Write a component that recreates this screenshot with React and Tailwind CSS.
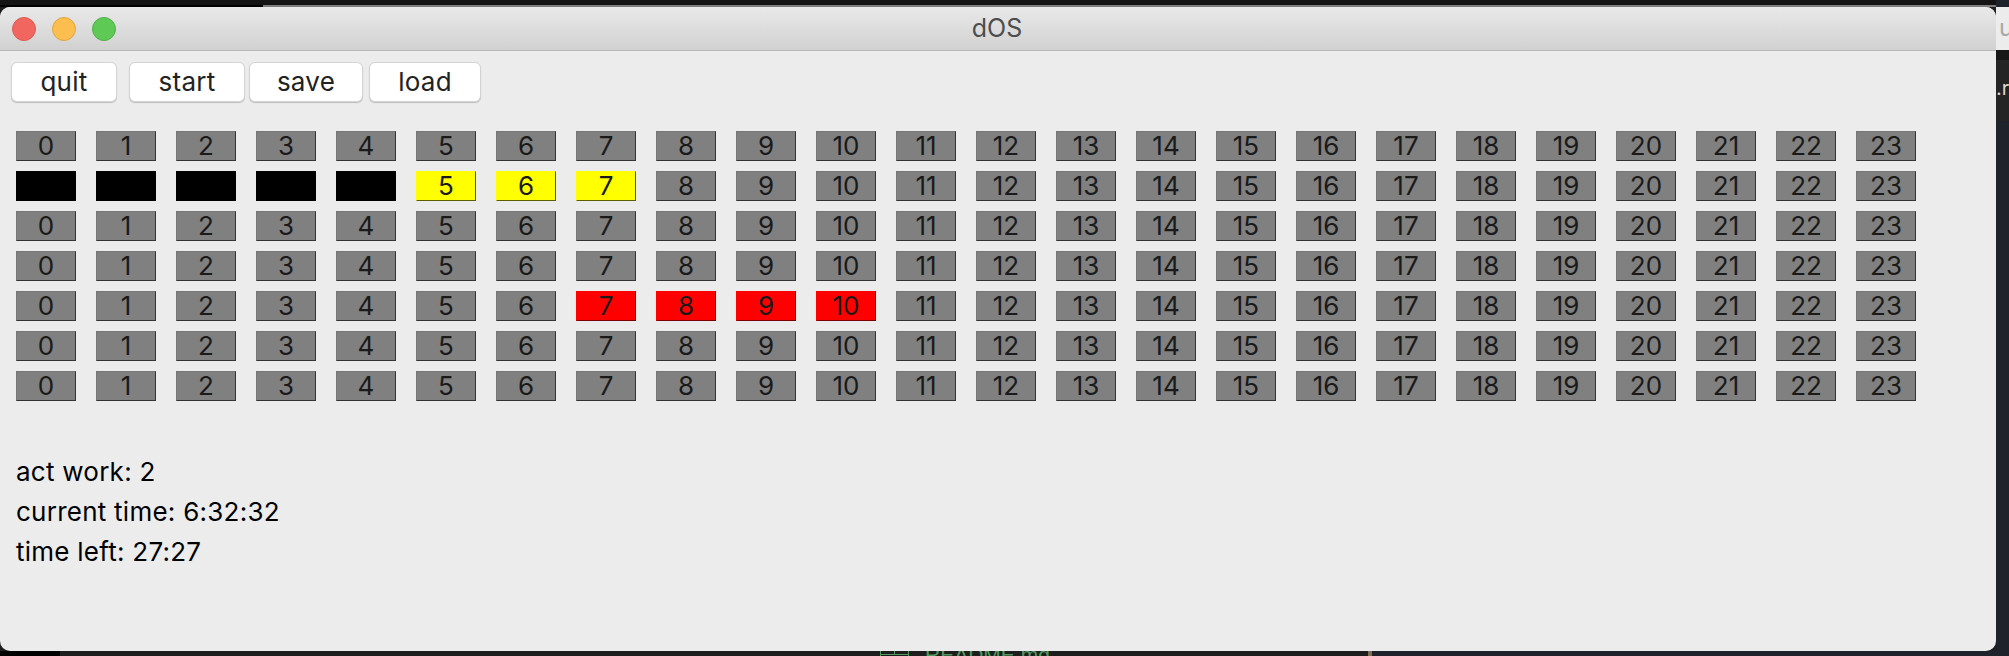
const cols = Array.from({ length: 24 }, (_, i) => i);

// state of the 7 rows: black cells hide their number, others are coloured
const rows = [
  {},
  { black: [0, 1, 2, 3, 4], yellow: [5, 6, 7] },
  {},
  {},
  { red: [7, 8, 9, 10] },
  {},
  {},
];

function Cell({ n, row }) {
  if (row.black?.includes(n)) {
    return <div className="w-[60px] h-[30px] bg-black" />;
  }
  let color = "bg-[#808080] border-r-[#333333] border-b-[#333333] border-t-[#767676] border-l-[#767676]";
  if (row.yellow?.includes(n)) color = "bg-[#ffff00] border-r-[#5c5c00] border-b-[#5c5c00] border-t-[#ffff00] border-l-[#ffff00]";
  if (row.red?.includes(n)) color = "bg-[#ff0000] border-r-[#7a0000] border-b-[#7a0000] border-t-[#ff0000] border-l-[#ff0000]";
  return (
    <div className={`w-[60px] h-[30px] border flex items-center justify-center text-[26px] leading-none text-[#1a1a1a] ${color}`}>
      {n}
    </div>
  );
}

function ToolButton({ label, className }) {
  return (
    <button className={`h-[40px] bg-white rounded-[6px] border border-[#d4d4d4] shadow-[0_1px_1px_rgba(0,0,0,0.2)] text-[26px] tracking-[0.25px] leading-none text-[#222222] ${className}`}>
      {label}
    </button>
  );
}

export default function App() {
  return (
    <div className="relative w-[2009px] h-[656px] overflow-hidden bg-[#1e1e1e] font-['Inter',sans-serif]">
      {/* stuff behind the window */}
      <div className="absolute inset-x-0 top-0 h-[5px] bg-[#141414]" />
      <div className="absolute left-0 top-[5px] w-[263px] h-[2px] bg-black" />
      <div className="absolute left-[263px] right-0 top-[5px] h-[2px] bg-[#7d7d7d]" />
      <div className="absolute left-0 bottom-0 w-[60px] h-[5px] bg-black" />
      <div className="absolute left-[1368px] bottom-0 w-[4px] h-[5px] bg-[#7d6f55]" />
      <div className="absolute left-[1372px] right-0 bottom-0 h-[5px] bg-[#1f222a]" />
      <div className="absolute right-0 top-0 w-[13px] h-full bg-[#1f222a]" />
      <div className="absolute right-0 top-[7px] w-[13px] h-[43px] bg-[#ececec] pl-[3px] overflow-hidden text-[24px] leading-[42px] text-[#a8a8a8]">u</div>
      <div className="absolute right-0 top-[50px] w-[13px] h-[10px] bg-[#171717]" />
      <div className="absolute right-0 top-[60px] w-[13px] h-[61px] bg-[#242424] overflow-hidden text-[20px] leading-[56px] text-[#d8d8d8]">.r</div>
      <div className="absolute left-[925px] top-[644px] font-['Liberation_Sans',sans-serif] text-[21px] leading-none text-[#4e9a5e]">README.md</div>
      <svg className="absolute left-[880px] top-[651px]" width="29" height="5" viewBox="0 0 29 5" fill="none" stroke="#4e9a5e">
        <path d="M0.5 0V5M28.5 0V5M0.5 3.5H28.5M14.5 0V3.5" />
      </svg>

      <div className="relative mt-[7px] w-[1996px] h-[644px] rounded-[10px] bg-[#ececec] overflow-hidden flex flex-col">
        <div className="relative h-[44px] shrink-0 flex items-center gap-4 px-3 border-b border-[#b9b9b9] bg-gradient-to-b from-[#e9e9e9] to-[#d1d1d1]">
          <div className="w-6 h-6 rounded-full bg-[#f1675f] border border-[#dd5a52]" />
          <div className="w-6 h-6 rounded-full bg-[#fbbe4f] border border-[#e2a640]" />
          <div className="w-6 h-6 rounded-full bg-[#5fc955] border border-[#4fae47]" />
          <div className="absolute inset-x-0 -left-[2px] text-center text-[25px] leading-none text-[#4d4d4d]">dOS</div>
        </div>

        <div className="flex pl-[11px] pt-[11px]">
          <ToolButton label="quit" className="w-[106px] mr-[12px]" />
          <ToolButton label="start" className="w-[116px] mr-[4px]" />
          <ToolButton label="save" className="w-[114px] mr-[6px]" />
          <ToolButton label="load" className="w-[112px]" />
        </div>

        <div className="flex flex-col gap-[10px] pl-4 pt-[29px]">
          {rows.map((row, r) => (
            <div key={r} className="flex gap-5">
              {cols.map(n => <Cell key={n} n={n} row={row} />)}
            </div>
          ))}
        </div>

        <div className="flex flex-col pl-4 pt-[51px] text-[26px] tracking-[0.25px] leading-[40px] text-black">
          <div>act work: 2</div>
          <div>current time: 6:32:32</div>
          <div>time left: 27:27</div>
        </div>
      </div>
    </div>
  );
}
